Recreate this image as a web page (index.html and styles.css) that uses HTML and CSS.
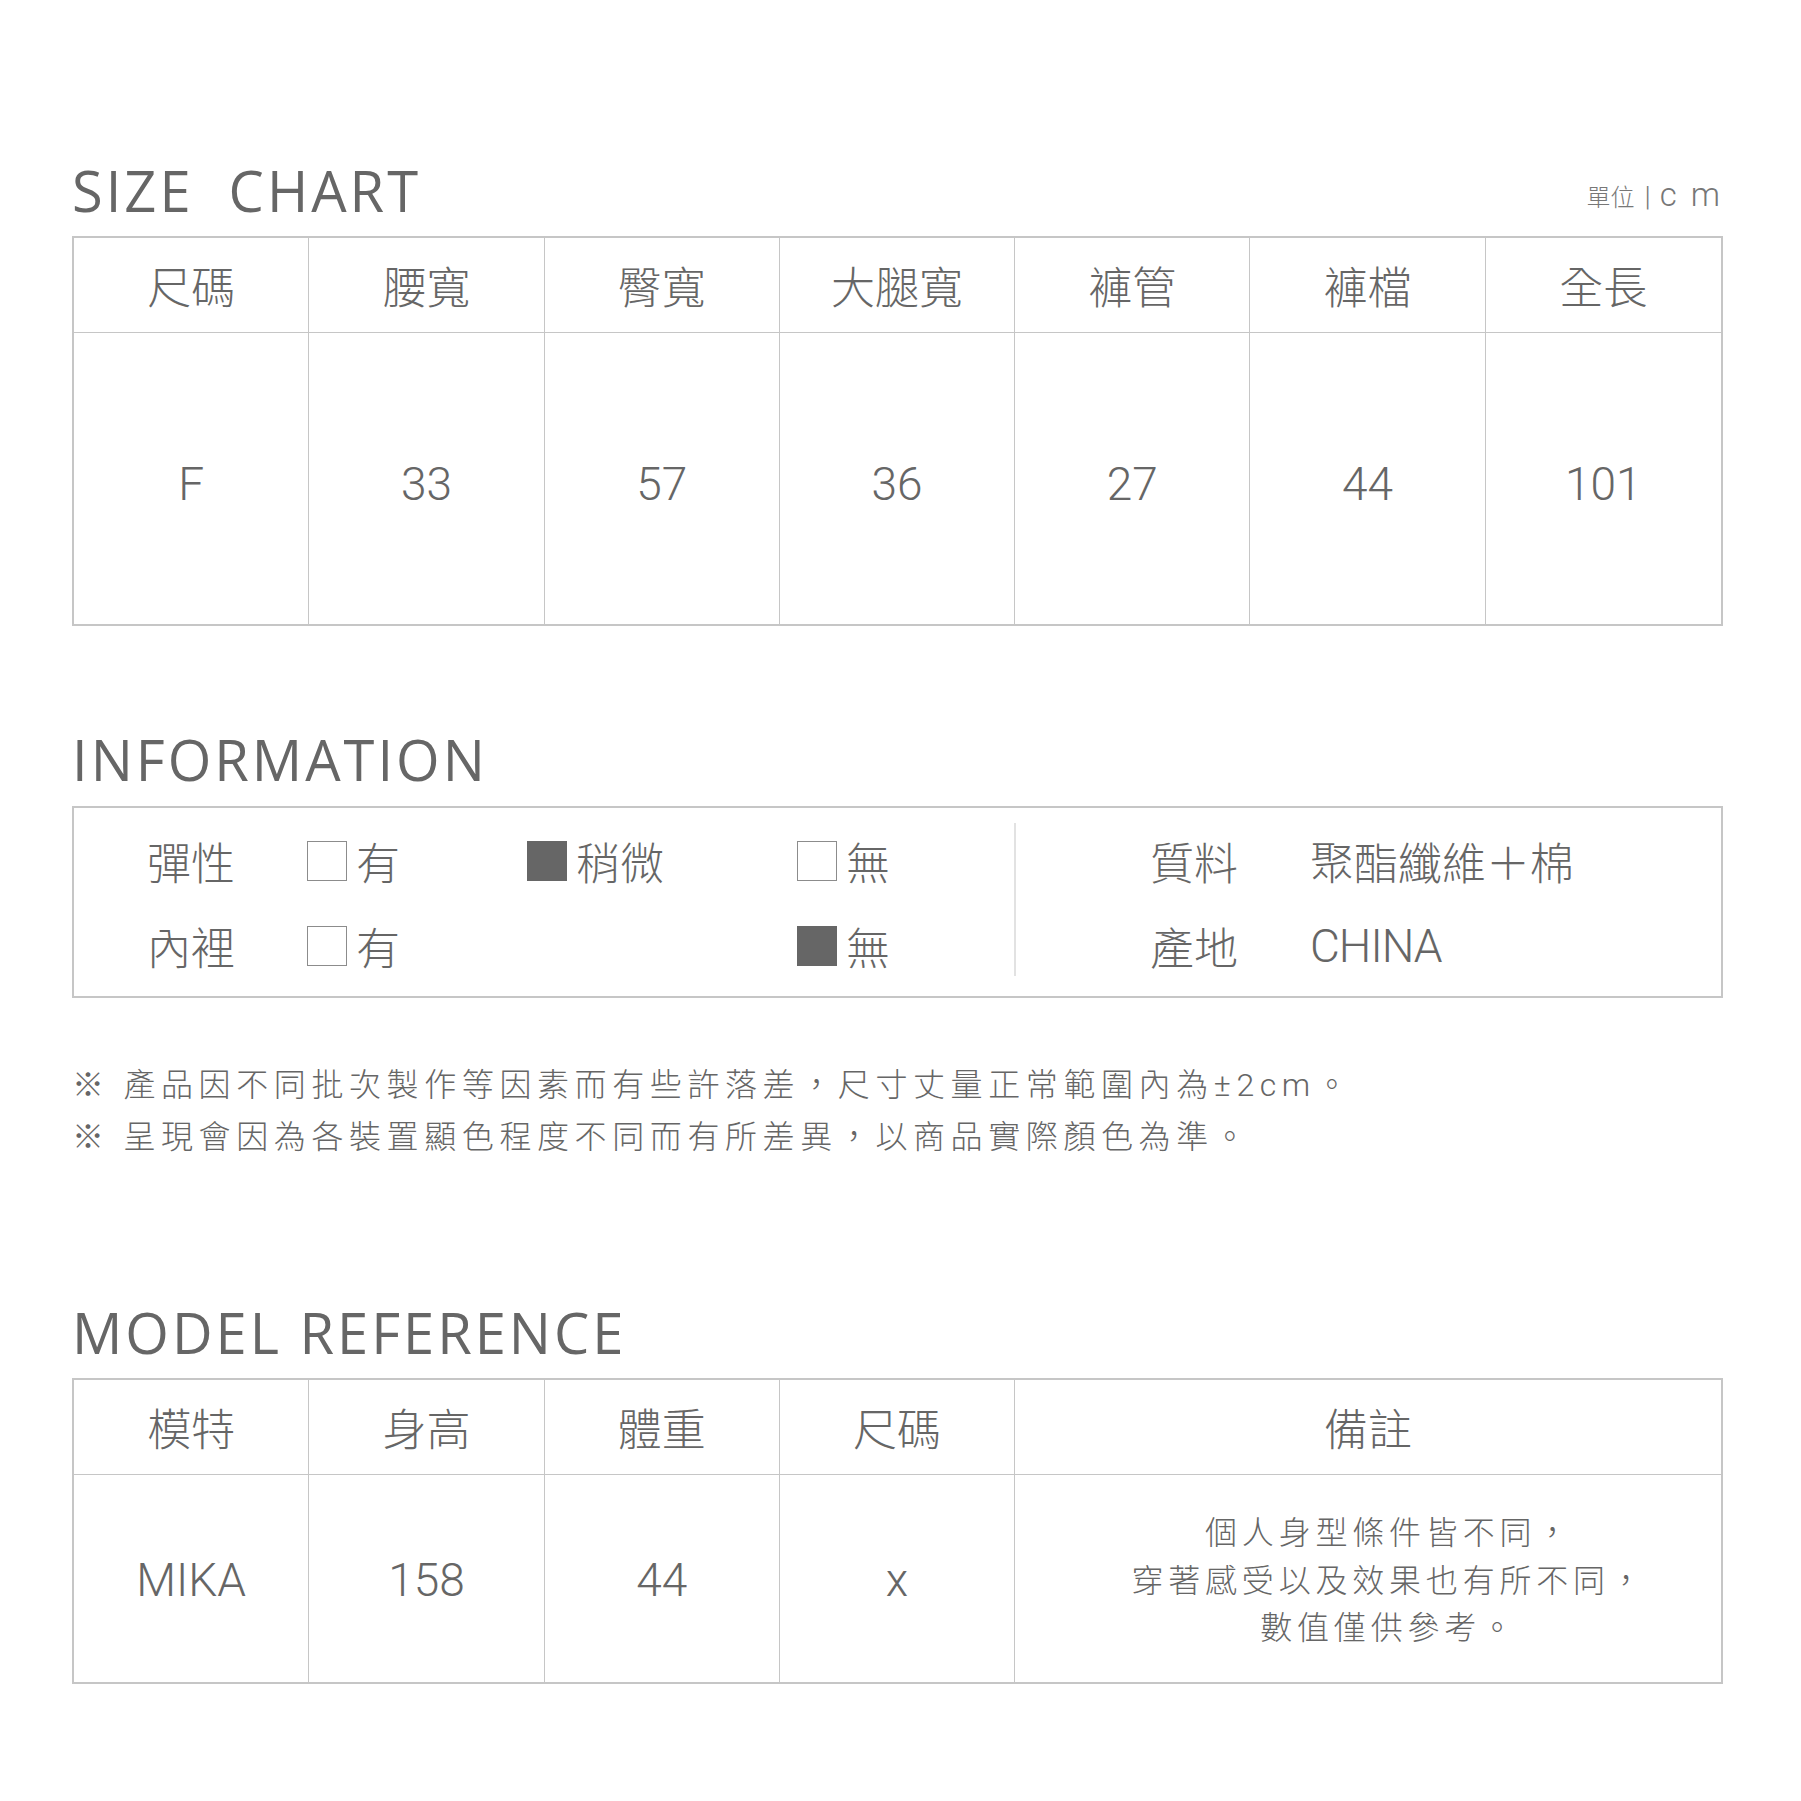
FILE: index.html
```html
<!DOCTYPE html>
<html lang="zh-Hant">
<head>
<meta charset="utf-8">
<title>Size Chart</title>
<link rel="stylesheet" href="styles.css">
</head>
<body>
<div class="page">
  <section class="sec sec-size">
    <div class="sec-head">
      <h2 class="sec-title">SIZE&nbsp; CHART</h2>
      <div class="unit"><span class="unit-zh">單位</span><span class="unit-bar">|</span><span class="unit-en">c m</span></div>
    </div>
    <div class="chart chart-size">
      <div class="cell th">尺碼</div>
      <div class="cell th">腰寬</div>
      <div class="cell th">臀寬</div>
      <div class="cell th">大腿寬</div>
      <div class="cell th">褲管</div>
      <div class="cell th">褲檔</div>
      <div class="cell th">全長</div>
      <div class="cell td">F</div>
      <div class="cell td">33</div>
      <div class="cell td">57</div>
      <div class="cell td">36</div>
      <div class="cell td">27</div>
      <div class="cell td">44</div>
      <div class="cell td">101</div>
    </div>
  </section>

  <section class="sec sec-info">
    <div class="sec-head">
      <h2 class="sec-title">INFORMATION</h2>
    </div>
    <div class="info">
      <div class="info-left">
        <div class="info-row">
          <span class="label">彈性</span>
          <span class="opt"><i class="box"></i>有</span>
          <span class="opt"><i class="box on"></i>稍微</span>
          <span class="opt"><i class="box"></i>無</span>
        </div>
        <div class="info-row">
          <span class="label">內裡</span>
          <span class="opt"><i class="box"></i>有</span>
          <span class="opt"></span>
          <span class="opt"><i class="box on"></i>無</span>
        </div>
      </div>
      <div class="info-right">
        <div class="info-row2"><span class="label">質料</span><span class="val">聚酯纖維＋棉</span></div>
        <div class="info-row2"><span class="label">產地</span><span class="val en">CHINA</span></div>
      </div>
    </div>
  </section>

  <div class="notes">
    <p class="note"><span class="mark">※</span> 產品因不同批次製作等因素而有些許落差，尺寸丈量正常範圍內為±2cm。</p>
    <p class="note"><span class="mark">※</span> 呈現會因為各裝置顯色程度不同而有所差異，以商品實際顏色為準。</p>
  </div>

  <section class="sec sec-model">
    <div class="sec-head">
      <h2 class="sec-title">MODEL REFERENCE</h2>
    </div>
    <div class="chart chart-model">
      <div class="cell th">模特</div>
      <div class="cell th">身高</div>
      <div class="cell th">體重</div>
      <div class="cell th">尺碼</div>
      <div class="cell th">備註</div>
      <div class="cell td">MIKA</div>
      <div class="cell td">158</div>
      <div class="cell td">44</div>
      <div class="cell td">x</div>
      <div class="cell td remark">個人身型條件皆不同，<br>穿著感受以及效果也有所不同，<br>數值僅供參考。</div>
    </div>
  </section>
</div>
</body>
</html>
```

FILE: styles.css
```css
html, body {
  margin: 0;
  padding: 0;
  background: #ffffff;
}

body {
  color: #666666;
  font-family: "Noto Sans CJK TC", "Noto Sans", sans-serif;
}

.page {
  width: 1651px;
  margin-left: 72px;
  padding-top: 160px;
  padding-bottom: 100px;
}

/* section headings */
.sec-head {
  display: flex;
  justify-content: space-between;
  align-items: flex-end;
  height: 60px;
}

.sec-title {
  margin: 0;
  font-family: "Open Sans", "Noto Sans", sans-serif;
  font-weight: 400;
  font-size: 56px;
  line-height: 60px;
  letter-spacing: 3px;
  color: #666666;
  white-space: pre;
}

.unit {
  display: flex;
  align-items: baseline;
  margin-right: 0;
  margin-bottom: 6px;
  color: #777777;
}

.unit-zh {
  font-family: "Noto Sans CJK TC", sans-serif;
  font-size: 24px;
  font-weight: 300;
}

.unit-bar {
  font-family: "Roboto", sans-serif;
  font-weight: 300;
  font-size: 28px;
  margin: 0 9px 0 10px;
}

.unit-en {
  font-family: "Roboto", sans-serif;
  font-weight: 300;
  font-size: 33px;
  letter-spacing: 3px;
}

/* charts */
.chart {
  display: grid;
  border: 2px solid #c6c6c6;
  margin-top: 16px;
}

.chart-size {
  grid-template-columns: repeat(7, 1fr);
}

.chart-model {
  grid-template-columns: 1fr 1fr 1fr 1fr 3fr;
}

.cell {
  display: flex;
  align-items: center;
  justify-content: center;
  border-right: 1px solid #c6c6c6;
  box-sizing: border-box;
}

.chart-size .cell:nth-child(7n) {
  border-right: 0;
}

.chart-model .cell:nth-child(5n) {
  border-right: 0;
}

.th {
  height: 95px;
  border-bottom: 1px solid #c6c6c6;
  font-family: "Noto Sans CJK TC", sans-serif;
  font-weight: 300;
  font-size: 44px;
}

.td {
  font-family: "Roboto", "Noto Sans CJK TC", sans-serif;
  font-weight: 300;
  font-size: 46px;
}

.chart-size .td {
  height: 291px;
  padding-top: 11px;
}

.chart-model .td {
  height: 207px;
  padding-top: 2px;
}

.chart-model .td.remark {
  font-family: "Noto Sans CJK TC", sans-serif;
  font-size: 32px;
  line-height: 47.5px;
  letter-spacing: 4.8px;
  text-align: center;
  padding-left: 42px;
  padding-top: 0;
}

/* information */
.sec-info {
  margin-top: 103px;
}

.info {
  display: flex;
  margin-top: 17px;
  border: 2px solid #c6c6c6;
  padding: 15px 0 20px;
}

.info-left {
  width: 940px;
  padding-left: 73px;
  padding-top: 8px;
  box-sizing: border-box;
  display: flex;
  flex-direction: column;
  gap: 25px;
}

.info-row {
  display: grid;
  grid-template-columns: 160px 220px 270px auto;
  align-items: center;
  height: 60px;
}

.label,
.opt,
.val {
  font-family: "Noto Sans CJK TC", sans-serif;
  font-weight: 300;
  font-size: 44px;
  line-height: 60px;
}

.opt {
  display: flex;
  align-items: center;
}

.box {
  display: block;
  width: 40px;
  height: 40px;
  box-sizing: border-box;
  border: 1.5px solid #8c8c8c;
  margin-right: 9px;
}

.box.on {
  background: #666666;
  border-color: #666666;
}

.info-right {
  flex: 1;
  border-left: 2px solid #e2e2e2;
  padding-left: 134px;
  padding-top: 8px;
  display: flex;
  flex-direction: column;
  gap: 25px;
}

.info-row2 {
  display: grid;
  grid-template-columns: 160px auto;
  align-items: center;
  height: 60px;
}

.val.en {
  font-family: "Roboto", sans-serif;
  font-weight: 300;
  font-size: 46px;
  letter-spacing: -1px;
}

/* notes */
.notes {
  margin-top: 58px;
}

.note {
  margin: 0;
  height: 52px;
  font-family: "Roboto", "Noto Sans CJK TC", sans-serif;
  font-weight: 300;
  font-size: 32px;
  line-height: 52px;
  letter-spacing: 5.6px;
  white-space: nowrap;
}

.mark {
  font-family: "Noto Sans CJK TC", sans-serif;
  letter-spacing: 6px;
}

/* model */
.sec-model {
  margin-top: 142px;
}
```
